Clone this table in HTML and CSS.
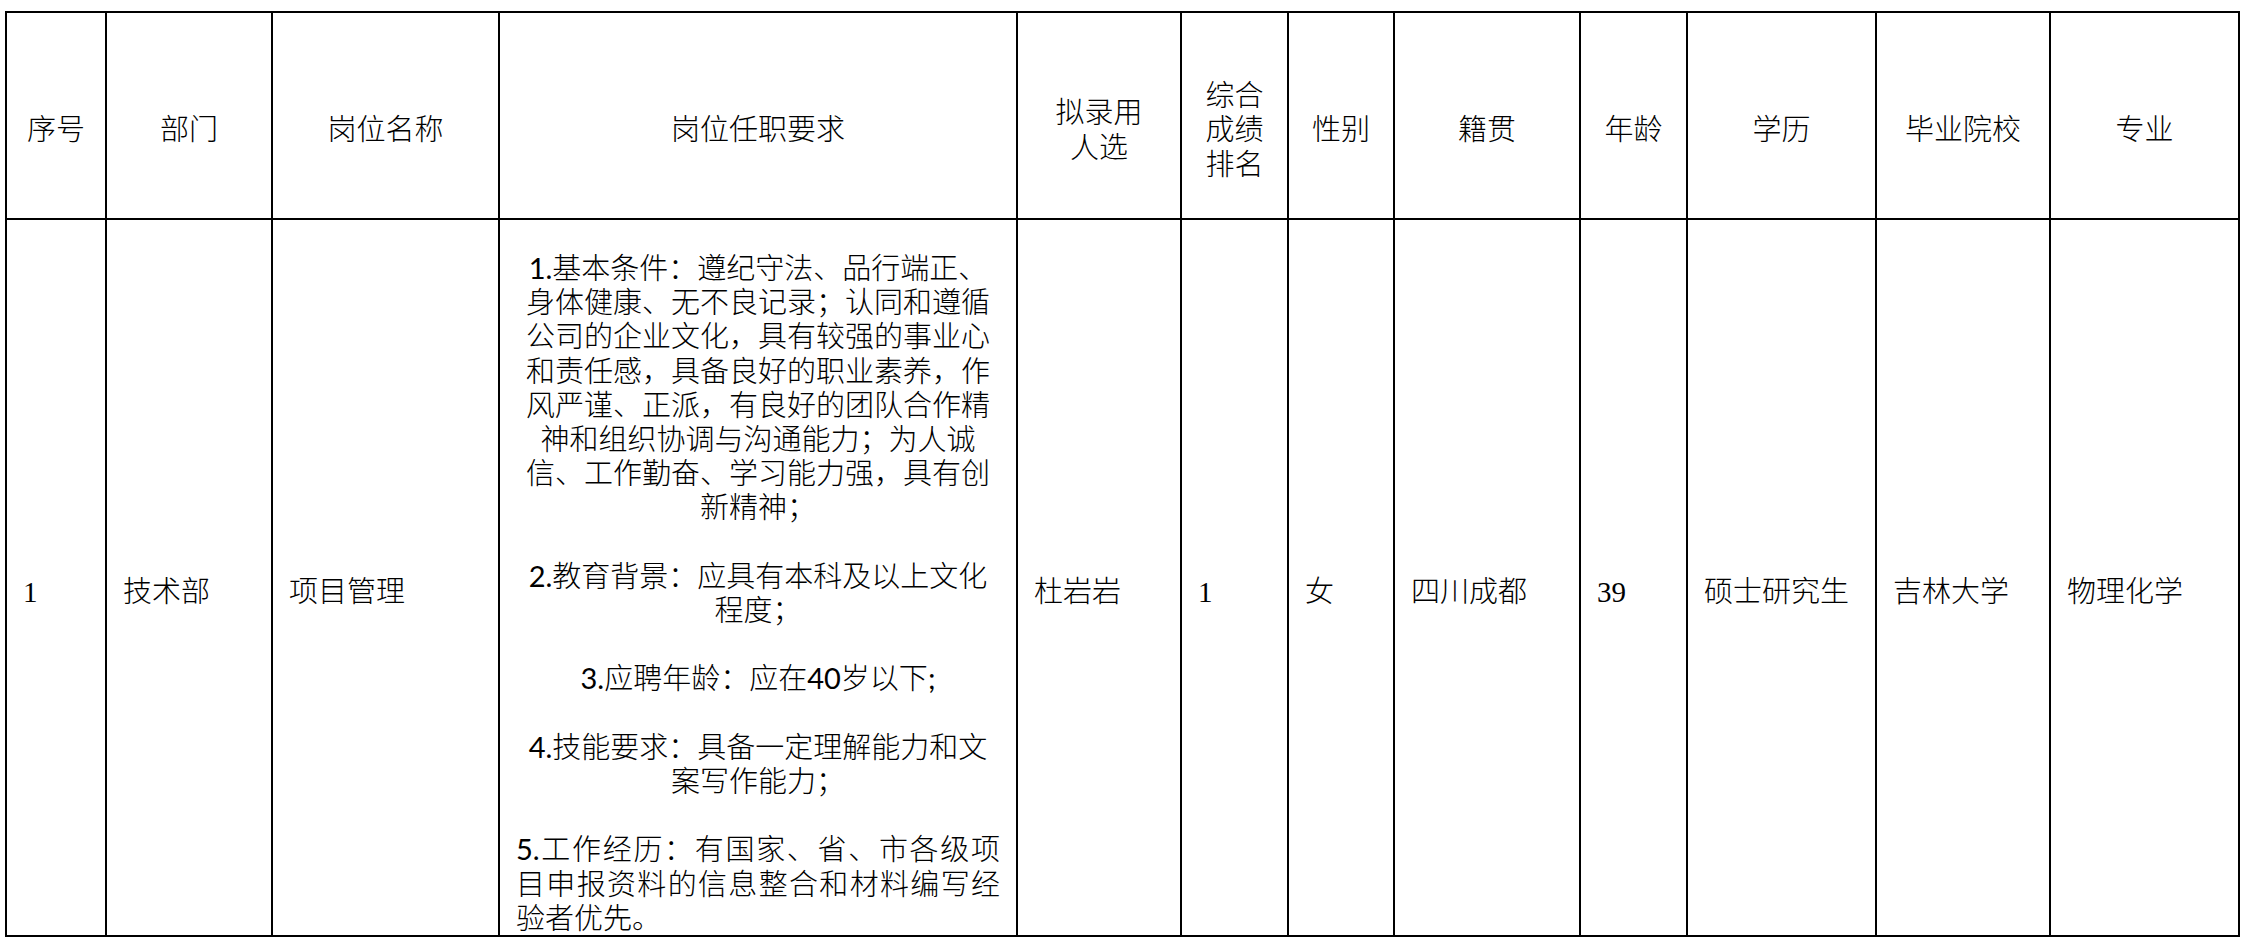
FILE: index.html
```html
<!DOCTYPE html>
<html lang="zh-CN">
<head>
<meta charset="utf-8">
<title>拟录用人员公示</title>
<link rel="stylesheet" href="styles.css">
</head>
<body>
<table class="sheet">
  <colgroup>
    <col class="c-no"><col class="c-dept"><col class="c-post"><col class="c-req">
    <col class="c-name"><col class="c-rank"><col class="c-sex"><col class="c-home">
    <col class="c-age"><col class="c-edu"><col class="c-school"><col class="c-major">
  </colgroup>
  <thead>
    <tr class="head">
      <th>序号</th>
      <th>部门</th>
      <th>岗位名称</th>
      <th>岗位任职要求</th>
      <th>拟录用<br>人选</th>
      <th>综合<br>成绩<br>排名</th>
      <th>性别</th>
      <th>籍贯</th>
      <th>年龄</th>
      <th>学历</th>
      <th>毕业院校</th>
      <th>专业</th>
    </tr>
  </thead>
  <tbody>
    <tr class="data">
      <td>1</td>
      <td>技术部</td>
      <td>项目管理</td>
      <td class="req">
        <p><span class="num">1.</span>基本条件：遵纪守法、品行端正、身体健康、无不良记录；认同和遵循公司的企业文化，具有较强的事业心和责任感，具备良好的职业素养，作风严谨、正派，有良好的团队合作精神和组织协调与沟通能力；为人诚信、工作勤奋、学习能力强，具有创新精神；</p>
        <p><span class="num">2.</span>教育背景：应具有本科及以上文化程度；</p>
        <p><span class="num">3.</span>应聘年龄：应在<span class="num">40</span>岁以下<span class="num">;</span></p>
        <p><span class="num">4.</span>技能要求：具备一定理解能力和文案写作能力；</p>
        <p class="just"><span class="num">5.</span>工作经历：有国家、省、市各级项目申报资料的信息整合和材料编写经验者优先。</p>
      </td>
      <td>杜岩岩</td>
      <td>1</td>
      <td>女</td>
      <td>四川成都</td>
      <td>39</td>
      <td>硕士研究生</td>
      <td>吉林大学</td>
      <td>物理化学</td>
    </tr>
  </tbody>
</table>
</body>
</html>
```

FILE: styles.css
```css
html, body {
  margin: 0;
  padding: 0;
  background: #ffffff;
}

.sheet {
  border-collapse: collapse;
  table-layout: fixed;
  width: 2235px;
  margin: 11px 0 0 5px;
  font-family: "Liberation Serif", "Noto Sans CJK SC", serif;
  font-size: 29px;
  line-height: 34.2px;
  color: #000000;
}

.c-no { width: 100px; }
.c-dept { width: 166px; }
.c-post { width: 227px; }
.c-req { width: 518px; }
.c-name { width: 164px; }
.c-rank { width: 107px; }
.c-sex { width: 106px; }
.c-home { width: 186px; }
.c-age { width: 107px; }
.c-edu { width: 189px; }
.c-school { width: 174px; }
.c-major { width: 189px; }

.sheet th,
.sheet td {
  border: 2px solid #000000;
  padding: 30px 16px 0 16px;
  vertical-align: middle;
  font-weight: 300;
}

.sheet th {
  text-align: center;
}

.head {
  height: 207px;
}

.data td {
  text-align: left;
}

.data td.req {
  font-family: Lato, "Noto Sans CJK SC", sans-serif;
  text-align: center;
  padding: 31px 16px 0 16px;
}

.req p {
  margin: 0;
}

.req p + p {
  margin-top: 34.2px;
}

.req p.just {
  text-align: justify;
}

.req .num {
  font-weight: 400;
}
```
